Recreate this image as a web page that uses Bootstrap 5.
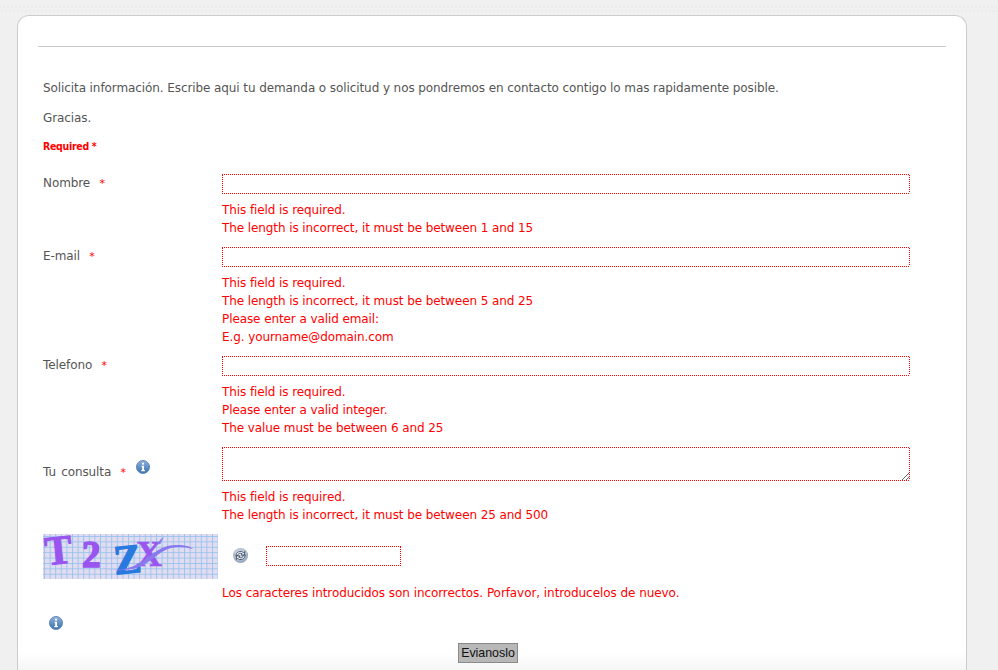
<!DOCTYPE html>
<html lang="es">
<head>
<meta charset="utf-8">
<title>Solicita información</title>
<link rel="stylesheet" href="https://cdn.jsdelivr.net/npm/bootstrap@5.3.0/dist/css/bootstrap.min.css">
<style>
html,body{height:670px;overflow:hidden}
body{background:radial-gradient(circle,#ebebeb .8px,transparent 1.1px) 6px 5px/4px 4px repeat-x,radial-gradient(circle,#ebebeb .8px,transparent 1.1px) 4px 9px/4px 4px repeat-x,#f0f0f0;font-family:"DejaVu Sans",sans-serif;font-size:12px;letter-spacing:-.09px;color:#555;padding:15px 31px 0 17px}
.panel-box{height:655px;background:linear-gradient(#fff 0,#fff 636px,#f5f5f5 655px);border:1px solid #ccc;border-bottom:0;border-radius:12px 12px 0 0;padding:30px 20px 0 20px}
.panel-rule{height:1px;background:#ccc;margin:0;opacity:1;border:0}
.panel-body{padding:0 0 0 5px}
.intro-line{margin:0;line-height:18px}
.intro-first{margin-top:32px}
.intro-second{margin-top:12px}
.req-note{margin-top:10px;line-height:18px;font-size:10.5px;font-weight:700;font-stretch:condensed;letter-spacing:-.3px;color:#f00}
.form-line{display:flex;margin-bottom:10px}
.first-line{margin-top:19px}
.field-label{width:179px;flex:none;line-height:18px;word-spacing:1.5px}
.consult-label{padding-top:16px}
.req-star{color:#f00;font-size:11px;margin-left:4px}
.field-main{width:688px;flex:none}
.bad-input{display:block;width:688px;height:20px;border:0;padding:1px;margin:0;outline:0;border-radius:0;background:
  repeating-linear-gradient(90deg,#f00 0 1px,#fff 1px 2px) left top/100% 1px no-repeat,
  repeating-linear-gradient(90deg,#f00 0 1px,#fff 1px 2px) left bottom/100% 1px no-repeat,
  repeating-linear-gradient(0deg,#f00 0 1px,#fff 1px 2px) left top/1px 100% no-repeat,
  repeating-linear-gradient(0deg,#f00 0 1px,#fff 1px 2px) right top/1px 100% no-repeat,
  #fff}
.bad-area{height:34px;resize:both}
.err-msg{color:#f00;line-height:18px;margin-top:7px}
.info-dot{vertical-align:top;margin:-3px 0 0 5px}
.captcha-line{height:45px;align-items:flex-start;margin-bottom:5px}
.captcha-pic{display:block;width:175px;height:45px;flex:none;overflow:visible}
.refresh-pic{margin:13px 0 0 14px;flex:none}
.captcha-input{width:135px;margin:12px 0 0 17px}
.captcha-err{margin:4px 0 0 179px;color:#f00;line-height:18px;word-spacing:.2px}
.info-alone{display:block;margin:14px 0 0 6px}
.send-btn{display:block;margin:13px 0 0 415px;width:60px;height:20px;padding:0;border:1px solid #8a8a8a;background:#b8b8b8;border-radius:0;font-family:"Liberation Sans",sans-serif;font-size:12.4px;letter-spacing:0;line-height:18px;color:#111}
</style>
</head>
<body>
<div class="panel-box">
  <hr class="panel-rule">
  <div class="panel-body">
    <p class="intro-line intro-first">Solicita información. Escribe aqui tu demanda o solicitud y nos pondremos en contacto contigo lo mas rapidamente posible.</p>
    <p class="intro-line intro-second">Gracias.</p>
    <div class="req-note">Required *</div>
    <form>
      <div class="form-line first-line">
        <label class="field-label">Nombre <span class="req-star">*</span></label>
        <div class="field-main">
          <input class="bad-input" type="text">
          <div class="err-msg">This field is required.<br>The length is incorrect, it must be between 1 and 15</div>
        </div>
      </div>
      <div class="form-line">
        <label class="field-label">E-mail <span class="req-star">*</span></label>
        <div class="field-main">
          <input class="bad-input" type="text">
          <div class="err-msg">This field is required.<br>The length is incorrect, it must be between 5 and 25<br>Please enter a valid email:<br>E.g. yourname@domain.com</div>
        </div>
      </div>
      <div class="form-line">
        <label class="field-label">Telefono <span class="req-star">*</span></label>
        <div class="field-main">
          <input class="bad-input" type="text">
          <div class="err-msg">This field is required.<br>Please enter a valid integer.<br>The value must be between 6 and 25</div>
        </div>
      </div>
      <div class="form-line">
        <label class="field-label consult-label">Tu consulta <span class="req-star">*</span>
          <svg class="info-dot" width="14" height="14" viewBox="0 0 15 15"><defs><linearGradient id="ig1" x1="0" y1="0" x2="0" y2="1"><stop offset="0" stop-color="#8fb2dc"/><stop offset="1" stop-color="#3a6fb0"/></linearGradient></defs><circle cx="7.5" cy="7.5" r="7" fill="url(#ig1)" stroke="#5f86b5" stroke-width="1"/><circle cx="7.5" cy="4" r="1.2" fill="#fff"/><path d="M6 6.2h2.6v4.6h1v1.2H5.6v-1.2h1V7.4H6z" fill="#fff"/></svg>
        </label>
        <div class="field-main">
          <textarea class="bad-input bad-area"></textarea>
          <div class="err-msg">This field is required.<br>The length is incorrect, it must be between 25 and 500</div>
        </div>
      </div>
      <div class="form-line captcha-line">
        <svg class="captcha-pic" viewBox="0 0 175 45" role="img" aria-label="captcha">
          <defs><pattern id="gridp" width="5.6" height="5.4" patternUnits="userSpaceOnUse" x="1" y="2"><path d="M0 .5H5.6M.5 0V5.4" stroke="#9cc4ee" stroke-width="1" fill="none"/></pattern></defs>
          <rect width="175" height="45" fill="#e2dcf0"/>
          <rect width="175" height="45" fill="url(#gridp)"/>
          <text x="2" y="30" transform="rotate(-6 15 18)" font-family="Liberation Serif,serif" font-weight="700" font-size="41" fill="#9a55ee" stroke="#9a55ee" stroke-width="1">T</text>
          <text x="39" y="33" font-family="Liberation Serif,serif" font-weight="700" font-size="37" fill="#9a55ee" stroke="#9a55ee" stroke-width="1.6">2</text>
          <text x="71" y="39" transform="rotate(-6 85 27)" font-family="Liberation Serif,serif" font-weight="700" font-size="41" fill="#2a79de" stroke="#2a79de" stroke-width="1.4">Z</text>
          <text x="93" y="32" font-family="Liberation Serif,serif" font-weight="700" font-size="36" fill="#9a55ee" stroke="#9a55ee" stroke-width=".6">X</text>
          <path d="M59 33c12 5 24 3 36-3 14-8 22-20 40-19 6 0 12 1 15 4-8-2-14-3-22-1-14 4-20 15-34 20-13 3-26 3-35-1z" fill="#8a78ee"/>
          <path d="M113 11l5-6 3-2-4 7z" fill="#8a78ee"/>
        </svg>
        <svg class="refresh-pic" width="17" height="17" viewBox="0 0 18 18"><defs><radialGradient id="rg1" cx=".45" cy=".4" r=".7"><stop offset="0" stop-color="#eef1f5"/><stop offset="1" stop-color="#7f94ad"/></radialGradient></defs><circle cx="9" cy="9" r="8" fill="url(#rg1)"/><path d="M4 9.5a5 5 0 0 1 8.3-3.6l1-1v3.7H9.6l1.4-1.4a3.2 3.2 0 0 0-5.2 2.3z" fill="#fff" stroke="#1f3350" stroke-width=".8"/><path d="M14 8.5a5 5 0 0 1-8.3 3.6l-1 1V9.4h3.7L7 10.8a3.2 3.2 0 0 0 5.2-2.3z" fill="#fff" stroke="#1f3350" stroke-width=".8"/></svg>
        <input class="bad-input captcha-input" type="text">
      </div>
      <div class="captcha-err">Los caracteres introducidos son incorrectos. Porfavor, introducelos de nuevo.</div>
      <svg class="info-alone" width="14" height="14" viewBox="0 0 15 15"><circle cx="7.5" cy="7.5" r="7" fill="url(#ig1)" stroke="#5f86b5" stroke-width="1"/><circle cx="7.5" cy="4" r="1.2" fill="#fff"/><path d="M6 6.2h2.6v4.6h1v1.2H5.6v-1.2h1V7.4H6z" fill="#fff"/></svg>
      <button class="send-btn" type="button">Evianoslo</button>
    </form>
  </div>
</div>
</body>
</html>
